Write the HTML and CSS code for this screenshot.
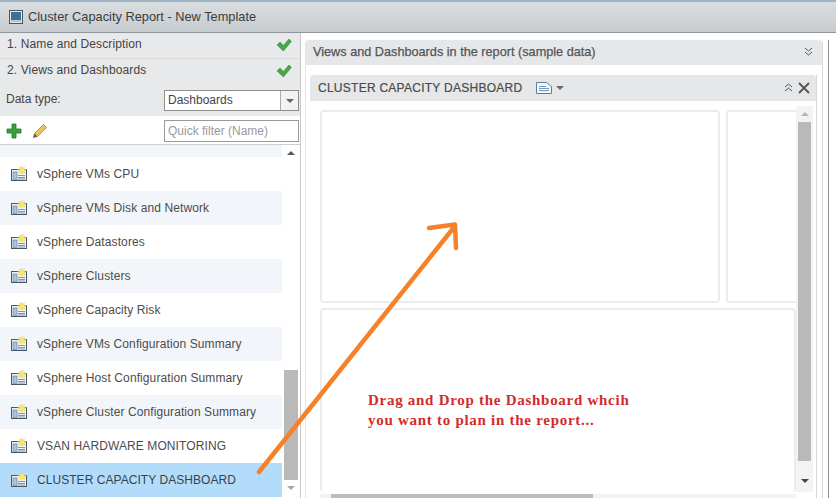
FILE: index.html
```html
<!DOCTYPE html>
<html lang="en">
<head>
<meta charset="utf-8">
<title>Cluster Capacity Report - New Template</title>
<link rel="stylesheet" href="styles.css">
</head>
<body>
<svg width="0" height="0" class="defs">
  <symbol id="dash" viewBox="0 0 16 16">
    <rect x="0.5" y="3.5" width="15" height="11" fill="#eef2f6" stroke="#46586c"/>
    <rect x="2" y="6" width="4" height="7.500" fill="#a9c4de" stroke="#5d7890" stroke-width=".6"/>
    <path d="M7 9.500h7M7 11.500h7M7 13h7" stroke="#6d7f90" stroke-width=".8"/>
    <path d="M10.500 0l1 2 2-1-.5 2.200 2.300.5-2 1.200 1 2-2.300-.5-1 2-1-2-2.200.6.800-2.100-2-1 2.200-.7-.6-2.200 2 1z" fill="#f8e76c" stroke="#e6cf52" stroke-width=".4"/>
  </symbol>
  <symbol id="check" viewBox="0 0 16 14">
    <path d="M1 7l3-3 3.400 3.400L13 1l2.400 2.400L7.400 13z" fill="#44a84a" stroke="#38913f" stroke-width=".6"/>
  </symbol>
</svg>
<div class="topstrip"></div>
<header class="titlebar">
  <svg class="titleicon" width="14" height="14" viewBox="0 0 14 14"><rect x=".5" y=".5" width="13" height="13" fill="#dfe8ef" stroke="#44576a"/><rect x="2" y="2" width="10" height="8" fill="#3f6f94"/><rect x="2" y="10" width="10" height="2" fill="#b9c6d0"/></svg>
  <span>Cluster Capacity Report - New Template</span>
</header>
<main class="layout">
  <aside class="left">
    <div class="step step-one"><span>1. Name and Description</span><svg class="check"><use href="#check"/></svg></div>
    <div class="step step-two"><span>2. Views and Dashboards</span><svg class="check"><use href="#check"/></svg></div>
    <div class="datatype">
      <span>Data type:</span>
      <div class="combo"><span class="combo-val">Dashboards</span><span class="combo-btn"><i class="tri-down"></i></span></div>
    </div>
    <div class="tools">
      <svg width="16" height="16" viewBox="0 0 16 16"><path d="M6 1h4v5h5v4h-5v5H6v-5H1V6h5z" fill="#3da03f" stroke="#1f7a26" stroke-width=".8"/></svg>
      <svg class="pencil" width="16" height="16" viewBox="0 0 16 16"><path d="M1.500 14.500l1-4L11.500 1.500l3 3-9 9z" fill="#ecc25a" stroke="#b98a25" stroke-width=".9"/><path d="M1.500 14.500l1-4 3 3z" fill="#6b5a3a"/></svg>
      <div class="filter">Quick filter (Name)</div>
    </div>
    <div class="listwrap">
      <div class="list">
        <div class="row row-cut tint"></div>
        <div class="row"><svg class="dash"><use href="#dash"/></svg>vSphere VMs CPU</div>
        <div class="row tint"><svg class="dash"><use href="#dash"/></svg>vSphere VMs Disk and Network</div>
        <div class="row"><svg class="dash"><use href="#dash"/></svg>vSphere Datastores</div>
        <div class="row tint"><svg class="dash"><use href="#dash"/></svg>vSphere Clusters</div>
        <div class="row"><svg class="dash"><use href="#dash"/></svg>vSphere Capacity Risk</div>
        <div class="row tint"><svg class="dash"><use href="#dash"/></svg>vSphere VMs Configuration Summary</div>
        <div class="row"><svg class="dash"><use href="#dash"/></svg>vSphere Host Configuration Summary</div>
        <div class="row tint"><svg class="dash"><use href="#dash"/></svg>vSphere Cluster Configuration Summary</div>
        <div class="row"><svg class="dash"><use href="#dash"/></svg>VSAN HARDWARE MONITORING</div>
        <div class="row selected"><svg class="dash"><use href="#dash"/></svg>CLUSTER CAPACITY DASHBOARD</div>
      </div>
      <div class="vscroll list-scroll">
        <i class="tri-up"></i>
        <div class="gap-top"></div>
        <div class="thumb"></div>
        <i class="tri-down"></i>
      </div>
    </div>
  </aside>
  <section class="right">
    <div class="outer">
      <div class="outer-head"><span>Views and Dashboards in the report (sample data)</span>
        <svg width="9" height="9" viewBox="0 0 9 9"><path d="M1 1l3.500 3L8 1M1 5l3.500 3L8 5" fill="none" stroke="#555"/></svg>
      </div>
      <div class="inner">
        <div class="inner-head">
          <span class="inner-title">CLUSTER CAPACITY DASHBOARD</span>
          <svg width="16" height="12" viewBox="0 0 16 12"><path d="M.5 .5h10l5 4v7H.5z" fill="#f2f6fa" stroke="#5a7f9f"/><path d="M3 4.500h7M3 6.500h10M3 8.500h10" stroke="#7a9ab5"/></svg>
          <i class="tri-down small"></i>
          <span class="spacer"></span>
          <svg width="9" height="9" viewBox="0 0 9 9"><path d="M1 4l3.500-3L8 4M1 8l3.500-3L8 8" fill="none" stroke="#555"/></svg>
          <svg class="close" width="12" height="12" viewBox="0 0 12 12"><path d="M1 1l10 10M11 1L1 11" stroke="#555" stroke-width="1.800"/></svg>
        </div>
        <div class="canvas">
          <div class="board">
            <div class="portlets">
              <div class="portlet"></div>
              <div class="portlet"></div>
            </div>
            <div class="portlet wide"></div>
            <div class="hscroll"><div class="hthumb"></div></div>
          </div>
          <div class="vscroll board-scroll">
            <i class="tri-up light"></i>
            <div class="thumb"></div>
            <i class="tri-down"></i>
          </div>
        </div>
      </div>
    </div>
    <div class="edge-lines"><b></b></div>
  </section>
</main>
<p class="note">Drag and Drop the Dashboard whcih<br>you want to plan in the report...</p>
<svg class="arrow" width="836" height="498" viewBox="0 0 836 498"><path d="M259 472L455 226M429 228L455 224.500L456 248" fill="none" stroke="#f5812a" stroke-width="4.500" stroke-linecap="round" stroke-linejoin="round"/></svg>
</body>
</html>
```

FILE: styles.css
```css
* { box-sizing: border-box; }
html, body { margin: 0; padding: 0; }
body {
  width: 836px; height: 498px; overflow: hidden; position: relative;
  background: #fff; color: #444;
  font-family: "Liberation Sans", Arial, sans-serif; font-size: 12px;
}
.defs { position: absolute; }
.topstrip { height: 2px; background: #9fb4c4; }
.titlebar {
  height: 31px; display: flex; align-items: center; gap: 5px; padding: 0 0 1px 9px;
  background: linear-gradient(#dadee1, #c6cbcf);
  border-bottom: 1px solid #8f979d;
  font-size: 12.8px; color: #3c3c3c;
}
.layout { display: flex; height: 465px; }
.left { width: 301px; flex: none; display: flex; flex-direction: column; border-right: 1px solid #c8c8c8; }
.step {
  display: flex; justify-content: space-between; padding: 4px 8px 0 7px;
  background: #e8e9ea; letter-spacing: .12px;
}
.step-one { height: 26px; border-bottom: 1px solid #dcdcdc; }
.step-two { height: 26px; padding-top: 4px; }
.check { width: 16px; height: 14px; margin-top: 1px; }
.datatype {
  height: 31px; flex: none; display: flex; justify-content: space-between; align-items: flex-start;
  padding: 5px 1px 0 6px; background: #e8e9ea;
}
.datatype > span { padding-top: 2px; }
.combo { width: 135px; height: 21px; display: flex; border: 1px solid #8e8e8e; background: #fff; }
.combo-val { flex: 1; padding: 2px 3px; }
.combo-btn { width: 18px; border-left: 1px solid #aaa; background: #f2f2f2; display: flex; align-items: center; justify-content: center; }
.tools {
  height: 29px; flex: none; display: flex; align-items: center; gap: 10px;
  padding: 2px 1px 0 6px; background: #fff; border-bottom: 1px solid #cfcfcf;
}
.filter {
  margin-left: auto; width: 135px; height: 22px; border: 1px solid #999;
  padding: 3px 3px; color: #9a9a9a;
}
.listwrap { flex: 1; display: flex; min-height: 0; }
.list { width: 282px; flex: none; }
.row {
  height: 34px; display: flex; align-items: center; gap: 10px; padding-left: 11px;
  background: #fff; color: #4c4c4c; white-space: nowrap; letter-spacing: .1px;
}
.row-cut { height: 12px; }
.tint { background: #f2f5fa; }
.selected { background: #b3dcfb; color: #38424c; letter-spacing: .05px; }
.dash { width: 16px; height: 16px; flex: none; }
.vscroll { display: flex; flex-direction: column; align-items: center; }
.list-scroll { width: 18px; flex: none; background: #fff; padding-top: 6px; }
.gap-top { height: 215px; }
.list-scroll .thumb { width: 14px; height: 110px; background: #b9b9b9; }
.list-scroll .tri-down { margin-top: 6px; border-top-color: #a6a6a6; }
.tri-down { display: block; width: 0; height: 0; border: 4px solid transparent; border-bottom: 0; border-top: 4px solid #666; }
.tri-down.small { margin-left: 4px; }
.tri-up { display: block; width: 0; height: 0; border: 4px solid transparent; border-top: 0; border-bottom: 4px solid #555; }
.tri-up.light { border-bottom-color: #b5b5b5; margin-top: 6px; }
.right { flex: 1; display: flex; padding: 7px 0 0 4px; min-width: 0; }
.outer { width: 518px; height: 458px; flex: none; border-left: 1px solid #e4e4e4; border-right: 1px solid #d8d8d8; border-radius: 4px 4px 0 0; }
.outer-head {
  height: 25px; display: flex; align-items: center; justify-content: space-between;
  padding: 0 9px 2px 7px; background: #e6e7e9; border-radius: 4px 4px 0 0; color: #555;
}
.outer-head span { font-size: 12.7px; -webkit-text-stroke: .25px #555; }
.inner { margin: 10px 5px 0 4px; height: 423px; display: flex; flex-direction: column; border-right: 1px solid #d8d8d8; }
.inner-head {
  height: 26px; flex: none; display: flex; align-items: center; padding: 0 6px 1px 8px;
  background: #e6e7e9; border-radius: 3px 3px 0 0; font-size: 12px;
}
.inner-title { color: #4a4a4a; letter-spacing: .26px; margin-right: 14px; -webkit-text-stroke: .2px #4a4a4a; }
.spacer { flex: 1; }
.close { margin-left: 5px; }
.canvas { flex: 1; display: flex; min-height: 0; padding-left: 10px; }
.board { width: 476px; flex: none; display: flex; flex-direction: column; padding-top: 9px; overflow: hidden; }
.portlets { display: flex; gap: 6px; }
.portlet { height: 193px; width: 400px; flex: none; border: 2px solid #ececec; border-radius: 4px; }
.portlet + .portlet { width: 80px; }
.portlet.wide { width: 476px; height: 184px; margin-top: 5px; flex: none; border-bottom: 0; }
.hscroll { height: 8px; margin-top: 2px; background: #f2f2f2; flex: none; }
.hthumb { width: 262px; height: 8px; margin-left: 11px; background: #bbb; }
.board-scroll { width: 17px; flex: none; background: #f3f3f3; height: 386px; margin-top: 5px; }
.board-scroll .thumb { width: 13px; height: 339px; margin-top: 6px; background: #b9b9b9; }
.board-scroll .tri-down { margin-top: 18px; border-top-color: #444; }
.edge-lines { display: flex; padding-left: 5px; flex: none; }
.edge-lines b { display: block; width: 1px; height: 100%; background: #8f8f8f; }
.note {
  position: absolute; left: 368px; top: 390px; margin: 0;
  font: bold 15px/20px "Liberation Serif", "Times New Roman", serif;
  color: #d12b2b; letter-spacing: .72px;
}
.arrow { position: absolute; left: 0; top: 0; pointer-events: none; }
```
